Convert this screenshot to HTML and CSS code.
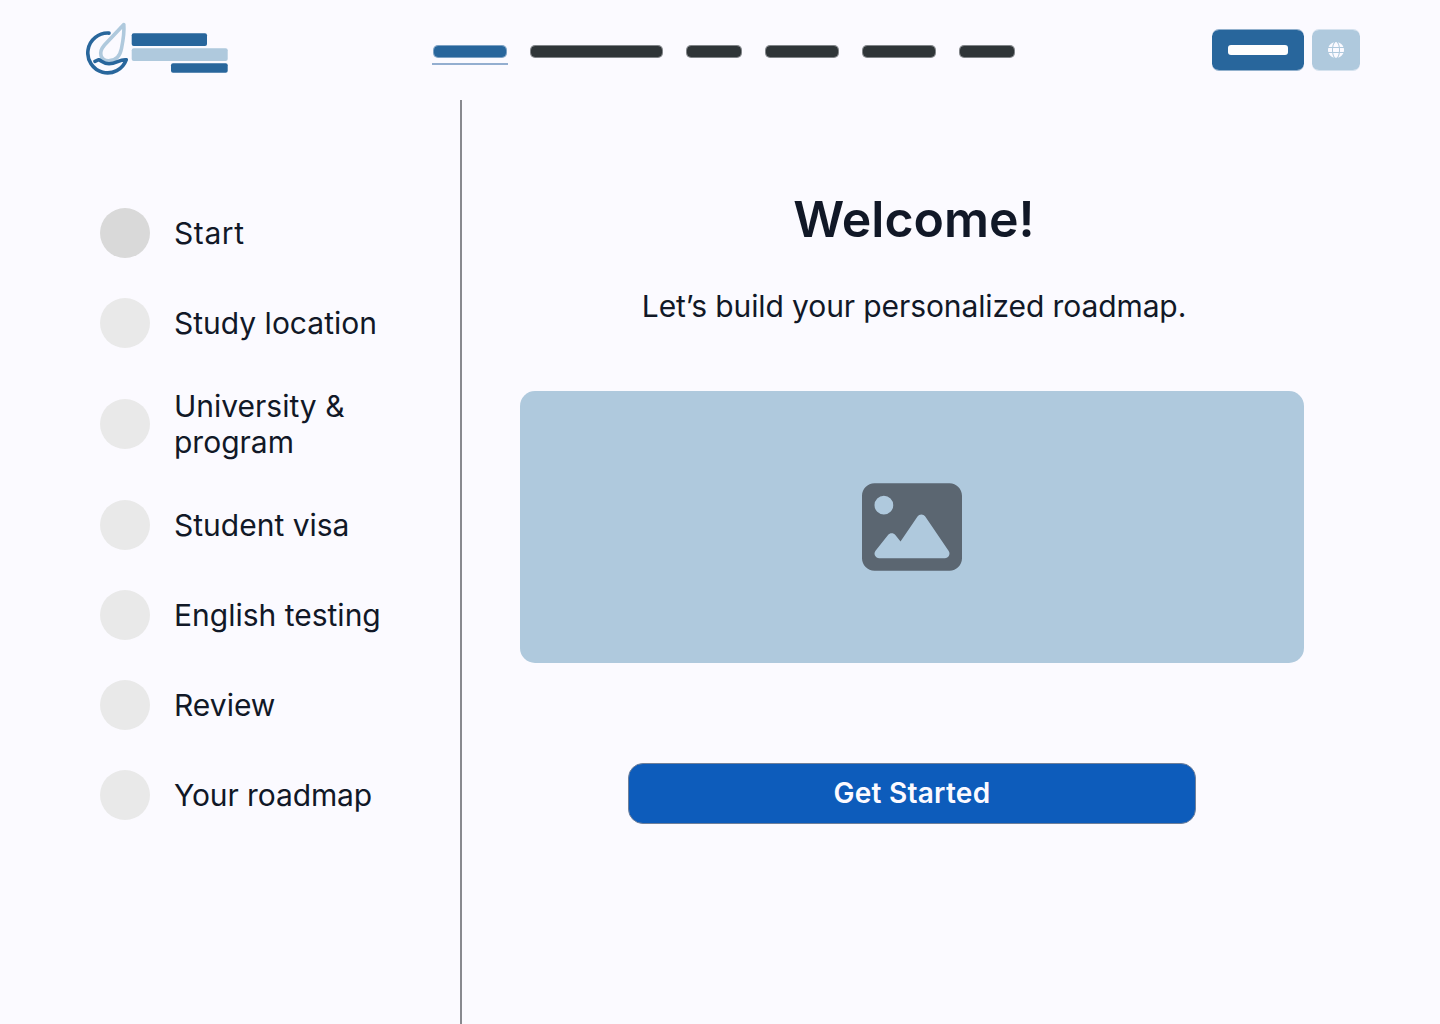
FILE: index.html
```html
<!DOCTYPE html>
<html lang="en">
<head>
  <meta charset="UTF-8">
  <title>Roadmap</title>
  <link rel="stylesheet" href="styles.css">
</head>

<body>
  <header class="topbar">
    <a href="#" class="logo" aria-label="Home">
      <svg width="142" height="54" viewBox="86 22 142 54">
        <g fill="none" stroke-linecap="round" stroke-linejoin="round" stroke-width="3.6">
          <path stroke="#afc9dd" d="M123.800 24.500L104.500 45C97.500 53 101 60.800 108.500 60.800C116 60.800 120 56 121.500 48.500C123 41 124.500 32 123.800 24.500Z"/>
          <path stroke="#28669c" d="M109 33.100A19.800 19.900 0 1 0 126.200 59.800C119.500 59 116.500 63.700 109 63.700C103.500 63.700 101.500 60.500 98.800 59.700L95 61.300"/>
        </g>
        <rect x="131.700" y="33.200" width="75.300" height="12.800" rx="2" fill="#28669c"/>
        <rect x="131.700" y="48.200" width="96" height="12.800" rx="2" fill="#afc9dd"/>
        <rect x="171" y="63.200" width="56.700" height="9.600" rx="2" fill="#28669c"/>
      </svg>
    </a>

    <nav class="menu">
      <a href="#" class="menu-item medium active"></a>
      <a href="#" class="menu-item large"></a>
      <a href="#" class="menu-item small"></a>
      <a href="#" class="menu-item medium"></a>
      <a href="#" class="menu-item medium"></a>
      <a href="#" class="menu-item small"></a>
    </nav>

    <div class="actions">
      <a href="#" class="login"><span class="login-bar"></span></a>
      <a href="#" class="language" aria-label="Language">
        <svg width="16" height="16" viewBox="0 0 512 512" fill="#fbfaff">
          <path d="M352 256c0 22.200-1.200 43.600-3.300 64H163.300c-2.200-20.400-3.300-41.800-3.300-64s1.200-43.600 3.300-64H348.700c2.200 20.400 3.300 41.800 3.300 64zm28.800-64H503.900c5.300 20.500 8.100 41.900 8.100 64s-2.800 43.500-8.100 64H380.800c2.100-20.600 3.200-42 3.200-64s-1.100-43.400-3.200-64zm112.600-32H376.700c-10-63.900-29.800-117.400-55.300-151.600c78.300 20.700 142 77.500 171.900 151.600zm-149.100 0H167.700c6.100-36.400 15.500-68.600 27-94.700c10.500-23.600 22.200-40.700 33.500-51.500C239.400 3.200 248.700 0 256 0s16.600 3.200 27.800 13.800c11.300 10.800 23 27.900 33.500 51.500c11.600 26 20.900 58.200 27 94.700zm-209 0H18.600C48.600 85.900 112.200 29.100 190.600 8.400C165.100 42.600 145.300 96.100 135.300 160zM8.100 192H131.200c-2.100 20.600-3.200 42-3.200 64s1.100 43.400 3.200 64H8.100C2.800 299.500 0 278.100 0 256s2.800-43.500 8.100-64zM194.700 446.600c-11.600-26-20.900-58.200-27-94.600H344.300c-6.100 36.400-15.500 68.600-27 94.600c-10.500 23.600-22.200 40.700-33.500 51.500C272.600 508.800 263.300 512 256 512s-16.600-3.200-27.800-13.800c-11.300-10.800-23-27.900-33.500-51.500zM135.300 352c10 63.900 29.800 117.400 55.300 151.600C112.200 482.900 48.600 426.100 18.600 352H135.300zm358.100 0c-30 74.100-93.600 130.900-171.900 151.600c25.500-34.200 45.200-87.700 55.300-151.600H493.400z"/>
        </svg>
      </a>
    </div>
  </header>

  <div class="container">
    <aside class="sidebar">
      <ul class="steps">
        <li class="step current"><span class="dot"></span><span class="step-name">Start</span></li>
        <li class="step"><span class="dot"></span><span class="step-name">Study location</span></li>
        <li class="step"><span class="dot"></span><span class="step-name">University &amp;<br>program</span></li>
        <li class="step"><span class="dot"></span><span class="step-name">Student visa</span></li>
        <li class="step"><span class="dot"></span><span class="step-name">English testing</span></li>
        <li class="step"><span class="dot"></span><span class="step-name">Review</span></li>
        <li class="step last"><span class="dot"></span><span class="step-name">Your roadmap</span></li>
      </ul>
    </aside>

    <main class="content">
      <h1>Welcome!</h1>
      <p class="intro">Let’s build your personalized roadmap.</p>
      <div class="picture">
        <svg width="100" height="100" viewBox="0 0 512 512" fill="#5b6671">
          <path d="M0 96C0 60.700 28.700 32 64 32H448c35.300 0 64 28.700 64 64V416c0 35.300-28.700 64-64 64H64c-35.300 0-64-28.700-64-64V96zM323.800 202.500c-4.500-6.600-11.900-10.500-19.800-10.500s-15.400 3.900-19.800 10.500l-87 127.600L170.700 297c-4.600-5.700-11.500-9-18.700-9s-14.200 3.300-18.700 9l-64 80c-5.800 7.200-6.900 17.100-2.900 25.400s12.400 13.600 21.600 13.600h96 32H424c8.900 0 17.100-4.900 21.200-12.800s3.600-17.400-1.400-24.700l-120-176zM112 192a48 48 0 1 0 0-96 48 48 0 1 0 0 96z"/>
        </svg>
      </div>
      <button class="start-button">Get Started</button>
    </main>
  </div>
</body>
</html>
```

FILE: styles.css
```css
* {
  box-sizing: border-box;
}

body {
  font-family: Inter, 'Liberation Sans', sans-serif;
  margin: 0;
  background: #fbfaff;
  color: #111827;
}

.topbar {
  display: flex;
  height: 100px;
  padding: 0 80px 0 86px;
}

.logo {
  width: 142px;
  padding-top: 22px;
}

.logo svg {
  display: block;
}

.menu {
  display: flex;
  gap: 23px;
  margin-left: 205px;
  padding-top: 45px;
}

.menu-item {
  position: relative;
  height: 13px;
  border: 1px solid rgba(47, 53, 56, 0.6);
  border-radius: 5px;
  background: #2f3538;
  background-clip: padding-box;
}

.menu-item.small {
  width: 56px;
}

.menu-item.medium {
  width: 74px;
}

.menu-item.large {
  width: 133px;
}

.menu-item.active {
  border-color: rgba(40, 102, 156, 0.6);
  background-color: #28669c;
}

.menu-item.active::after {
  content: "";
  position: absolute;
  left: -2px;
  right: -2px;
  top: 17px;
  height: 2px;
  background: #93aed0;
}

.actions {
  display: flex;
  gap: 8px;
  margin-left: auto;
  padding-top: 29px;
}

.login,
.language {
  display: flex;
  align-items: center;
  justify-content: center;
  height: 42px;
  border-top: 1px solid;
  border-bottom: 1px solid;
  border-radius: 7px;
  background-clip: padding-box;
}

.login {
  width: 92px;
  border-color: rgba(40, 102, 156, 0.5);
  background-color: #28669c;
}

.login-bar {
  width: 60px;
  height: 10px;
  border-radius: 3px;
  background: #fdfdfd;
}

.language {
  width: 48px;
  border-color: rgba(175, 201, 221, 0.5);
  background-color: #afc9dd;
}

.container {
  display: flex;
  height: 924px;
}

.sidebar {
  width: 462px;
  padding: 108px 0 0 100px;
  border-right: 2px solid #88898f;
}

.steps {
  display: flex;
  flex-direction: column;
  gap: 40px;
  margin: 0;
  padding: 0;
  list-style: none;
}

.step {
  display: flex;
  align-items: center;
  gap: 24px;
}

.dot {
  width: 50px;
  height: 50px;
  border-radius: 50%;
  background: #e9e9e9;
}

.step.current .dot {
  background: #d9d9d9;
}

.step-name {
  font-size: 30px;
  line-height: 36px;
}

.step.current .step-name {
  letter-spacing: 0.6px;
}

.step.last .step-name {
  letter-spacing: -0.1px;
}

.content {
  display: flex;
  flex-direction: column;
  align-items: center;
  width: 784px;
  margin-left: 58px;
}

h1 {
  margin: 89px 0 0 4px;
  font-size: 50px;
  font-weight: 600;
  line-height: 60px;
}

.intro {
  margin: 39px 0 0 4px;
  font-size: 30px;
  line-height: 36px;
  letter-spacing: -0.1px;
}

.picture {
  display: flex;
  align-items: center;
  justify-content: center;
  width: 784px;
  height: 272px;
  margin-top: 67px;
  border-radius: 15px;
  background: #afc9dd;
}

.start-button {
  width: 568px;
  height: 61px;
  margin-top: 100px;
  padding: 0 0 2px;
  border: 1px solid #70809a;
  border-radius: 15px;
  background: #0d5cbb;
  color: #fbfaff;
  font-family: inherit;
  font-size: 28px;
  font-weight: 600;
  letter-spacing: 0.25px;
}
```
